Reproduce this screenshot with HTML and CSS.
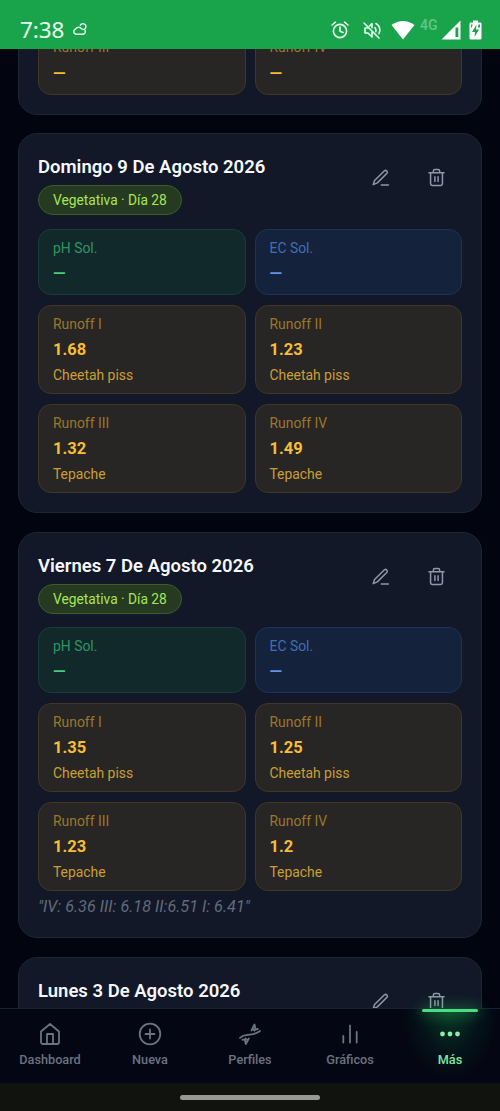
FILE: index.html
```html
<!DOCTYPE html>
<html lang="es">
<head>
<meta charset="utf-8">
<meta name="viewport" content="width=device-width, initial-scale=1">
<title>Registros</title>
<link rel="stylesheet" href="styles.css">
</head>
<body>
<svg class="defs" width="0" height="0" aria-hidden="true">
  <symbol id="edit" viewBox="0 0 24 24"><path d="M13 21.500H22M17 3.500a2.300 2.300 0 0 1 3.200 3.200L8 18.800 2.800 21 4.500 15.800z"/></symbol>
  <symbol id="trash" viewBox="0 0 24 24"><path d="M2.500 6h19M4.500 6v14a2 2 0 0 0 2 2h11a2 2 0 0 0 2-2V6M8 6V4a2 2 0 0 1 2-2h4a2 2 0 0 1 2 2v2M10 11v6M14 11v6"/></symbol>
</svg>
<div class="screen">
  <header class="status">
    <span class="clock">7:38</span>
    <svg class="weather" width="16" height="15" viewBox="0 0 16 15"><path d="M4 12.2h7.200a2.500 2.500 0 0 0 .6-4.800Q10 7.200 9.500 6.800A3.500 3.500 0 0 0 3.400 7.200 2.600 2.600 0 0 0 4 12.200zM8.300 3.200a3 3 0 1 1 4.600 3.700"/></svg>
    <div class="indicators">
      <svg class="alarm" width="20" height="20" viewBox="0 0 20 20"><circle cx="10" cy="11" r="6.600"/><path d="M10 7v4.300l3 1.200M2 5l3.400-2.800M18 5l-3.400-2.800"/></svg>
      <svg class="mute" width="20" height="20" viewBox="0 0 20 20"><path d="M2 3l15 15M3 8v5h3l4 4v-6M7.500 6L10 3.700v4M3 8h3M13 7.600q1.400 2 .8 4M14 3.500c3.800 2.200 4.800 6.500 3 10"/></svg>
      <svg class="wifi" width="24" height="20" viewBox="0 0 24 20"><path d="M.5 5Q12-3 23.500 5L12 19.500z"/></svg>
      <span class="network">4G</span>
      <svg class="signal" width="20" height="20" viewBox="0 0 20 20"><path fill-rule="evenodd" d="M19.500.5v19H.5zM14.500 7.500v9.500h2.800V7.500z"/></svg>
      <svg class="battery" width="13" height="20" viewBox="0 0 13 20"><path d="M4 .5h5v2h2.200q1.300 0 1.300 1.300v14.400q0 1.300-1.300 1.300H1.800Q.5 19.500.5 18.200V3.800Q.5 2.500 1.800 2.500H4z"/><path class="bolt" d="M7.500 4.500L3 12h3l-.5 5L10 9.500H7zM2 4.500h1.800L2 8.500zM9.500 4.500H11v3H9z"/></svg>
    </div>
  </header>

  <main class="feed">
    <article class="card">
      <div class="grid">
        <div class="tile amber"><span class="label">Runoff III</span><b class="value">—</b></div>
        <div class="tile amber"><span class="label">Runoff IV</span><b class="value">—</b></div>
      </div>
    </article>

    <article class="card">
      <div class="head">
        <div><h2>Domingo 9 De Agosto 2026</h2><span class="badge">Vegetativa · Día 28</span></div>
        <div class="actions"><svg class="icon"><use href="#edit"/></svg><svg class="icon"><use href="#trash"/></svg></div>
      </div>
      <div class="grid">
        <div class="tile green"><span class="label">pH Sol.</span><b class="value">—</b></div>
        <div class="tile blue"><span class="label">EC Sol.</span><b class="value">—</b></div>
        <div class="tile amber"><span class="label">Runoff I</span><b class="value">1.68</b><span class="strain">Cheetah piss</span></div>
        <div class="tile amber"><span class="label">Runoff II</span><b class="value">1.23</b><span class="strain">Cheetah piss</span></div>
        <div class="tile amber"><span class="label">Runoff III</span><b class="value">1.32</b><span class="strain">Tepache</span></div>
        <div class="tile amber"><span class="label">Runoff IV</span><b class="value">1.49</b><span class="strain">Tepache</span></div>
      </div>
    </article>

    <article class="card">
      <div class="head">
        <div><h2>Viernes 7 De Agosto 2026</h2><span class="badge">Vegetativa · Día 28</span></div>
        <div class="actions"><svg class="icon"><use href="#edit"/></svg><svg class="icon"><use href="#trash"/></svg></div>
      </div>
      <div class="grid">
        <div class="tile green"><span class="label">pH Sol.</span><b class="value">—</b></div>
        <div class="tile blue"><span class="label">EC Sol.</span><b class="value">—</b></div>
        <div class="tile amber"><span class="label">Runoff I</span><b class="value">1.35</b><span class="strain">Cheetah piss</span></div>
        <div class="tile amber"><span class="label">Runoff II</span><b class="value">1.25</b><span class="strain">Cheetah piss</span></div>
        <div class="tile amber"><span class="label">Runoff III</span><b class="value">1.23</b><span class="strain">Tepache</span></div>
        <div class="tile amber"><span class="label">Runoff IV</span><b class="value">1.2</b><span class="strain">Tepache</span></div>
      </div>
      <p class="note">"IV: 6.36 III: 6.18 II:6.51 I: 6.41"</p>
    </article>

    <article class="card">
      <div class="head">
        <div><h2>Lunes 3 De Agosto 2026</h2></div>
        <div class="actions"><svg class="icon"><use href="#edit"/></svg><svg class="icon"><use href="#trash"/></svg></div>
      </div>
    </article>
  </main>

  <nav class="tabs">
    <a class="tab"><svg viewBox="0 0 24 24"><path d="M3 9.500L12 2l9 7.500V20a2 2 0 0 1-2 2H5a2 2 0 0 1-2-2zM9 22V12h6v10"/></svg>Dashboard</a>
    <a class="tab"><svg viewBox="0 0 24 24"><circle cx="12" cy="12" r="10.300"/><path d="M12 7.500v9M7.500 12h9"/></svg>Nueva</a>
    <a class="tab"><svg viewBox="0 0 24 24"><path d="M2 15.800C5.500 12.500 8.500 13.200 12 12.700S18.500 11.600 22 9M13.500 8.500L16.500 2.500 17.500 7.500 19.800 7M14.500 6.500l2 2M10.800 16.500L7.800 22 6.800 17.300 4.500 17.800M9.500 18.500l-1.800-2"/></svg>Perfiles</a>
    <a class="tab"><svg viewBox="0 0 24 24"><path d="M5.300 20.500v-6.500M12 20.500V3.500M18.700 20.500V10"/></svg>Gráficos</a>
    <a class="tab active"><svg viewBox="0 0 24 24"><circle cx="4.500" cy="12" r="2.400"/><circle cx="12" cy="12" r="2.400"/><circle cx="19.500" cy="12" r="2.400"/></svg>Más</a>
  </nav>
  <footer class="gesture"><i class="pill"></i></footer>
</div>
</body>
</html>
```
FILE: styles.css
```css
* { box-sizing: border-box; }
body { margin: 0; font-family: Roboto, sans-serif; background: #020410; }
.defs { display: none; }
svg { fill: none; stroke: currentColor; stroke-linecap: round; stroke-linejoin: round; flex: none; }
.screen { width: 500px; height: 1111px; display: flex; flex-direction: column; overflow: hidden; }

.status { height: 49px; flex: none; background: #19a44c; color: #e9fff0; display: flex; align-items: center; padding: 10px 18px 0 20px; position: relative; z-index: 2; }
.clock { font: 400 22.5px/30px "Noto Sans", sans-serif; letter-spacing: -0.1px; width: 52px; }
.weather { stroke-width: 1.4; }
.indicators { display: flex; align-items: center; margin-left: auto; }
.alarm, .mute { stroke-width: 1.6; }
.mute { margin-left: 12px; }
.wifi { margin-left: 9px; }
.wifi, .signal, .battery { fill: #fff; stroke: none; }
.network { font-size: 14px; font-weight: 600; line-height: 16px; color: #5fc582; margin: -9px 0 0 5px; width: 18px; }
.signal { margin-left: 3px; }
.battery { margin-left: 8px; }
.battery .bolt { fill: #19a44c; }

.feed { flex: 1; min-height: 0; overflow: hidden; display: flex; flex-direction: column; gap: 18.5px; padding: 0 18px; }
.card { flex: none; background: #121827; border: 1px solid #1c2734; border-radius: 19px; padding: 19px; }
.card:first-child { margin-top: -40.6px; }
.card:last-child { height: 140px; }
.head { display: flex; justify-content: space-between; height: 75.2px; }
h2 { margin: 0 0 4px; font-size: 18.5px; line-height: 28px; font-weight: 600; color: #f5f7fa; white-space: nowrap; }
.badge { display: flex; align-items: center; width: max-content; height: 30px; padding: 0 14px; border: 1px solid #3c5c28; border-radius: 15px; background: #263a22; color: #a6e656; font-size: 13.75px; white-space: nowrap; }
.actions { display: flex; gap: 37px; padding: 15px 16px 0 0; color: #8f98a8; }
.icon { width: 19px; height: 19px; stroke-width: 1.9; }

.grid { display: grid; grid-template-columns: 1fr 1fr; gap: 9.500px 9px; }
.tile { display: flex; flex-direction: column; border: 1px solid; border-radius: 13px; padding: 8px 14px 5px; height: 66.500px; }
.tile:has(.strain) { height: 89.500px; }
.label { font-size: 13.9px; line-height: 20px; }
.value { font-size: 16.500px; font-weight: 700; line-height: 22px; margin-top: 5.4px; }
.strain { font-size: 13.9px; line-height: 20px; margin-top: 4px; color: #c99e38; }
.green { background: #12292c; border-color: #183d3b; }
.green .label { color: #2f9560; }
.green .value { color: #4ac97b; }
.blue { background: #14223c; border-color: #1c3357; }
.blue .label { color: #416faf; }
.blue .value { color: #6094e4; }
.amber { background: #282624; border-color: #413722; }
.amber .label { color: #9c772b; }
.amber .value { color: #f6bd36; }
.note { margin: 4.2px 0 0; font-size: 16.2px; line-height: 24px; height: 23px; font-style: italic; color: #636b7b; }

.tabs { height: 75px; flex: none; display: grid; grid-template-columns: repeat(5, 1fr); background: #040713; border-top: 1px solid #192130; position: relative; z-index: 1; }
.tab { display: flex; flex-direction: column; align-items: center; padding-top: 13px; gap: 5px; font-size: 12.700px; line-height: 18px; font-weight: 500; color: #6b7280; position: relative; }
.tab svg { width: 24px; height: 24px; stroke-width: 1.800; }
.tab.active { color: #7fe99b; background: radial-gradient(ellipse at 50% 0, #0a3b25 0, #04131a 42%, transparent 68%); }
.tab.active svg { fill: #86efac; stroke: none; }
.tab.active::before { content: ""; position: absolute; top: 0; left: 22px; width: 56px; height: 3px; border-radius: 2px; background: #4ade80; box-shadow: 0 0 14px 1px rgba(34, 197, 94, .7); }
.gesture { height: 28px; flex: none; display: flex; justify-content: center; padding-top: 12px; background: #11130f; }
.pill { width: 140px; height: 5px; border-radius: 3px; background: #989895; }
```
